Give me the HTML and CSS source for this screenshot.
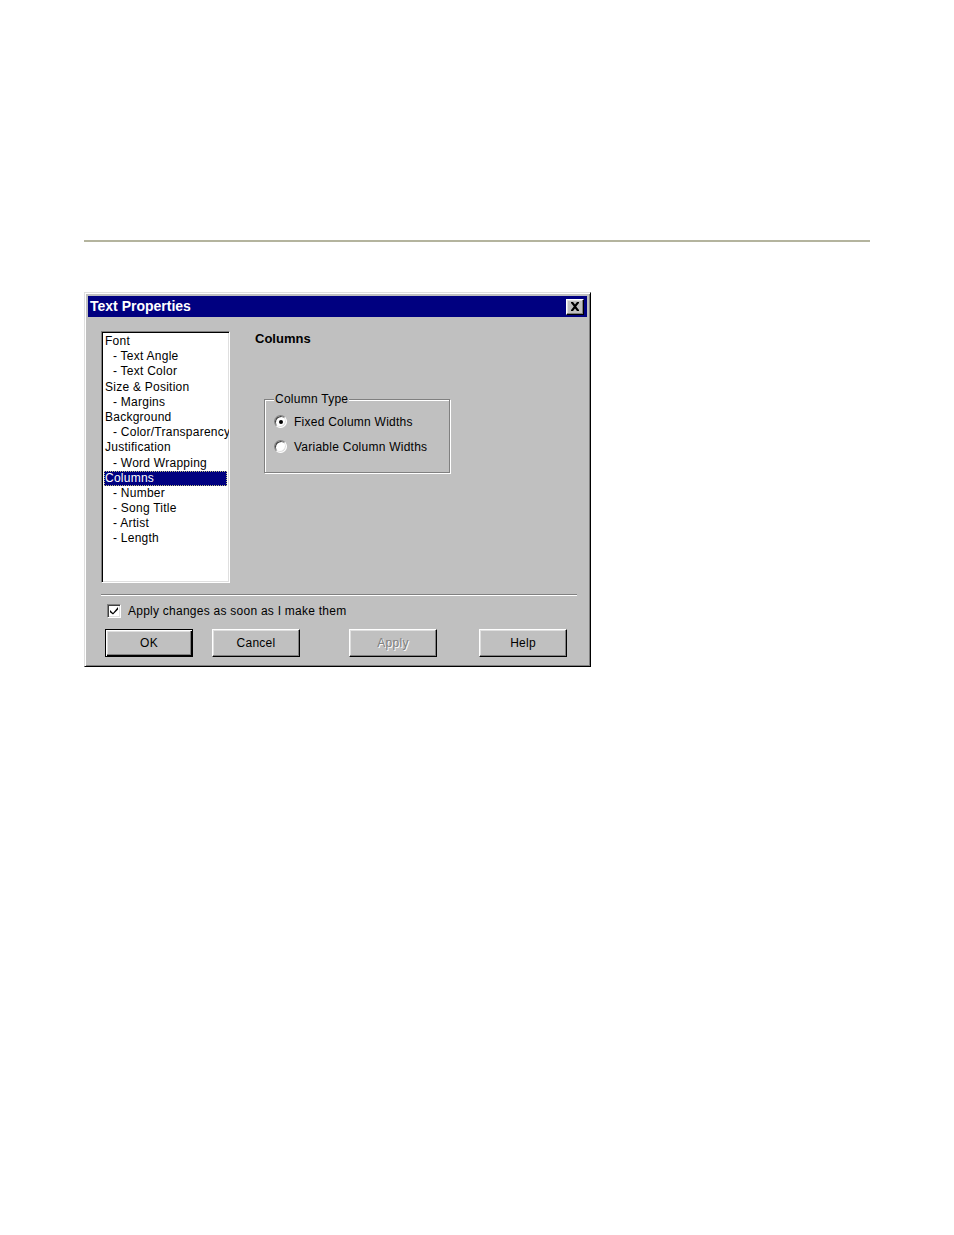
FILE: index.html
```html
<!DOCTYPE html>
<html>
<head>
<meta charset="utf-8">
<title>Text Properties</title>
<link rel="stylesheet" href="styles.css">
</head>
<body>
<div class="page">
  <div class="rule"></div>
  <div class="dialog">
    <div class="titlebar">
      <span class="title">Text Properties</span>
      <span class="close"><svg width="10" height="9" viewBox="0 0 10 9"><path d="M1 0h2l2 2.5L7 0h2v1L6.2 4.5 9 8v1H7L5 6.5 3 9H1V8l2.8-3.5L1 1z" fill="#000"/></svg></span>
    </div>
    <div class="body">
      <div class="main">
        <div class="listbox">
          <div class="item">Font</div>
          <div class="item sub">- Text Angle</div>
          <div class="item sub">- Text Color</div>
          <div class="item">Size &amp; Position</div>
          <div class="item sub">- Margins</div>
          <div class="item">Background</div>
          <div class="item sub">- Color/Transparency</div>
          <div class="item">Justification</div>
          <div class="item sub">- Word Wrapping</div>
          <div class="item selected">Columns</div>
          <div class="item sub">- Number</div>
          <div class="item sub">- Song Title</div>
          <div class="item sub">- Artist</div>
          <div class="item sub">- Length</div>
        </div>
        <div class="panel">
          <div class="heading">Columns</div>
          <fieldset class="group">
            <legend>Column Type</legend>
            <div class="option"><span class="radio checked"></span><span>Fixed Column Widths</span></div>
            <div class="option"><span class="radio"></span><span>Variable Column Widths</span></div>
          </fieldset>
        </div>
      </div>
      <div class="separator"></div>
      <div class="checkrow">
        <span class="checkbox"><svg width="10" height="10" viewBox="0 0 10 10"><path d="M1 4l3 3L9 1v2.5L4 8.5 1 6.2z" fill="#000"/></svg></span>
        <span>Apply changes as soon as I make them</span>
      </div>
      <div class="buttons">
        <div class="btn default"><span class="btn-face">OK</span></div>
        <div class="btn cancel"><span class="btn-face">Cancel</span></div>
        <div class="btn apply disabled"><span class="btn-face">Apply</span></div>
        <div class="btn help"><span class="btn-face">Help</span></div>
      </div>
    </div>
  </div>
</div>
</body>
</html>
```

FILE: styles.css
```css
* { box-sizing: border-box; }
html, body { margin: 0; padding: 0; background: #fff; }
body { font-family: "Liberation Sans", Arial, sans-serif; font-size: 12px; color: #000; }

.page { padding: 240px 0 0 84px; }
.rule { width: 786px; height: 2px; background: #b4b49e; }

.dialog {
  margin-top: 50px;
  width: 507px;
  height: 375px;
  background: #c0c0c0;
  border: 1px solid;
  border-color: #dfdfdf #000 #000 #dfdfdf;
  box-shadow: inset 1px 1px #fff, inset -1px -1px #808080;
  padding: 3px;
  letter-spacing: 0.25px;
}

.titlebar {
  height: 21px;
  background: #000080;
  display: flex;
  align-items: center;
  justify-content: space-between;
  padding: 0 3px 0 2px;
  letter-spacing: 0;
}
.title { color: #fff; font-weight: bold; font-size: 14px; line-height: 21px; }
.close {
  width: 18px; height: 16px;
  background: #c0c0c0;
  border: 1px solid;
  border-color: #fff #000 #000 #fff;
  box-shadow: inset -1px -1px #808080, inset 1px 1px #dfdfdf;
  display: flex; align-items: center; justify-content: center;
}
.close svg { display: block; }

.body { padding: 14px 0 0 13px; }
.main { display: flex; }

.listbox {
  width: 129px;
  height: 252px;
  background: #fff;
  border: 1px solid;
  border-color: #808080 #fff #fff #808080;
  box-shadow: inset 1px 1px #000, inset -1px -1px #dfdfdf;
  padding: 2px 2px;
  overflow: hidden;
}
.item { line-height: 15.2px; height: 15.2px; white-space: nowrap; padding-left: 1px; }
.item.sub { padding-left: 9px; }
.item.selected { background: #000080; color: #fff; outline: 1px dotted #c0c080; outline-offset: -1px; }

.panel { padding-left: 25px; }
.heading { font-weight: bold; font-size: 13px; line-height: 15px; letter-spacing: 0; }

.group {
  margin: 46px 0 0 9px;
  width: 186px;
  padding: 2px 8px 13px 9px;
  border: 1px solid #808080;
  box-shadow: inset 1px 1px #fff, 1px 1px #fff;
}
.group legend { padding: 0 1px; line-height: 15px; background: #c0c0c0; }
.option { height: 25px; display: flex; align-items: center; gap: 7px; }

.radio {
  position: relative;
  width: 13px; height: 13px;
  border-radius: 50%;
  background: #fff;
  border: 1px solid;
  border-color: #808080 #fff #fff #808080;
  box-shadow: inset 1px 1px #404040, inset -1px -1px #dfdfdf;
  flex: none;
}
.radio.checked::after {
  content: "";
  position: absolute;
  left: 3.5px; top: 3.5px;
  width: 4px; height: 4px;
  border-radius: 50%;
  background: #000;
}

.separator {
  width: 476px;
  height: 2px;
  margin-top: 11px;
  border-top: 1px solid #808080;
  border-bottom: 1px solid #fff;
}

.checkrow {
  margin-top: 7px;
  padding-left: 6px;
  height: 16px;
  display: flex;
  align-items: center;
  gap: 7px;
}
.checkbox {
  width: 14px; height: 14px;
  background: #fff;
  border: 1px solid;
  border-color: #808080 #fff #fff #808080;
  box-shadow: inset 1px 1px #404040, inset -1px -1px #dfdfdf;
  display: flex; align-items: center; justify-content: center;
  flex: none;
}
.checkbox svg { display: block; }

.buttons { display: flex; margin-top: 10px; padding-left: 4px; }
.btn {
  width: 88px; height: 28px;
  border: 1px solid;
  border-color: #fff #000 #000 #fff;
  box-shadow: inset -1px -1px #808080, inset 1px 1px #dfdfdf;
  display: flex; align-items: center; justify-content: center;
}
.btn.default {
  border: 1px solid #000;
  box-shadow: inset 1px 1px #fff, inset -1px -1px #000, inset -2px -2px #808080, inset 2px 2px #dfdfdf;
}
.btn-face { line-height: 14px; }
.btn.cancel { margin-left: 19px; }
.btn.apply { margin-left: 49px; }
.btn.help { margin-left: 42px; }
.btn.disabled .btn-face { color: #808080; text-shadow: 1px 1px #fff; }
```
